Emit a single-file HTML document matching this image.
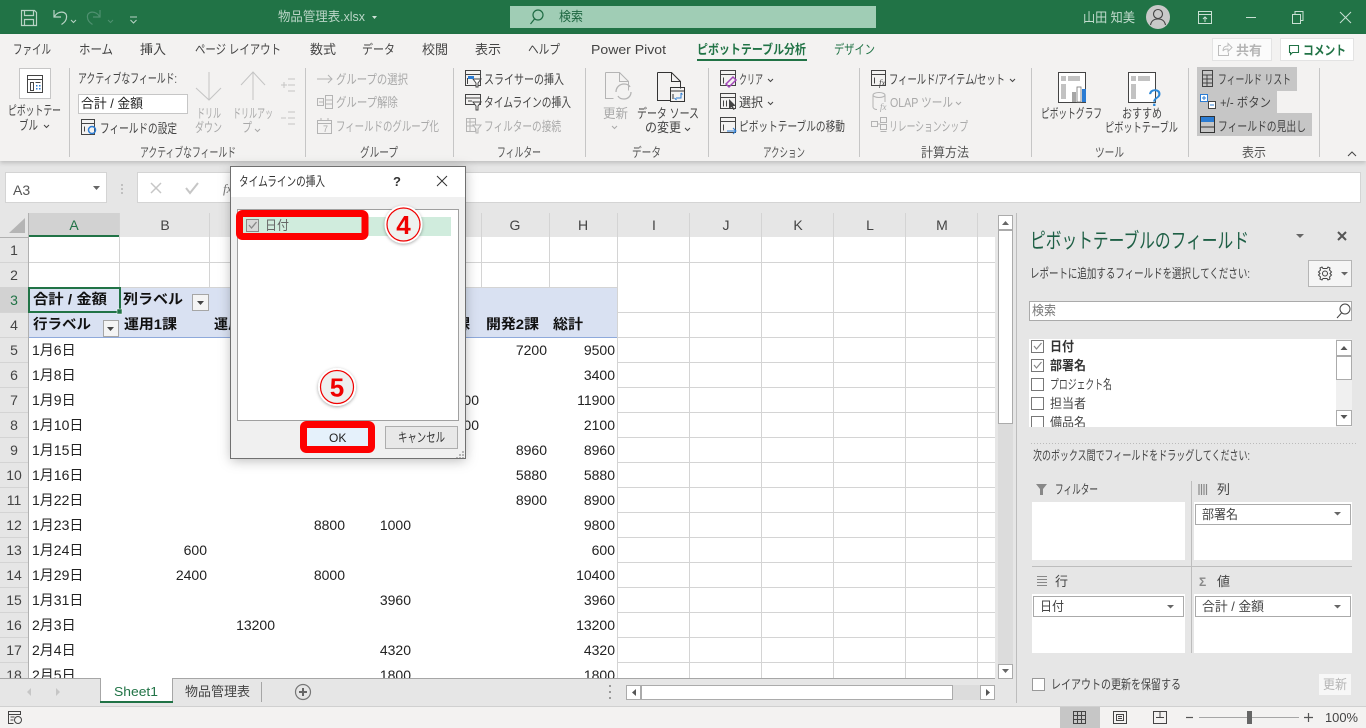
<!DOCTYPE html>
<html lang="ja"><head><meta charset="utf-8"><title>物品管理表.xlsx</title>
<style>
html,body{margin:0;padding:0;background:#e6e6e6;overflow:hidden}
svg{display:block;font-family:"Liberation Sans","Noto Sans CJK JP",sans-serif}
text{white-space:pre}
.r{font-size:13px;fill:#444}
.d{font-size:13px;fill:#a9a9a9}
.l{font-size:13px;fill:#555}
.t{font-size:13px;fill:#444}
.c{font-size:14px;fill:#222}
.n{font-size:14px;fill:#222;text-anchor:end}
.b{font-size:14px;fill:#111;font-weight:700}
.h{font-size:14px;fill:#444;text-anchor:middle}
.p{font-size:13px;fill:#444}
.i{fill:none;stroke:#444;stroke-width:1}
.g{fill:none;stroke:#b0b0b0;stroke-width:1}
.gl{stroke:#d4d4d4;stroke-width:1}
.sep{stroke:#c6c6c6;stroke-width:1}
</style></head><body>
<svg xmlns="http://www.w3.org/2000/svg" width="1366" height="728" viewBox="0 0 1366 728">
<defs>
<filter id="sh" x="-20%" y="-20%" width="140%" height="140%"><feDropShadow dx="0" dy="2" stdDeviation="6" flood-color="#000" flood-opacity=".28"/></filter>
<filter id="rs" x="-5%" y="-50%" width="110%" height="200%"><feDropShadow dx="0" dy="2" stdDeviation="2" flood-color="#000" flood-opacity=".18"/></filter>
<filter id="cs" x="-30%" y="-30%" width="160%" height="160%"><feDropShadow dx="0" dy="1" stdDeviation="1.5" flood-color="#000" flood-opacity=".35"/></filter>
</defs>

<!-- background -->
<rect width="1366" height="728" fill="#e6e6e6"/>

<!-- title bar -->
<rect width="1366" height="34" fill="#217346"/>
<g fill="none" stroke="#b9d3c5" stroke-width="1.2">
<path d="M21.5 10.5h13l2 2v13h-15z"/><path d="M24.5 10.5v5h9v-5M24.5 25.5v-6h9v6"/>
<path d="M54 10v7h7M54.5 16.5c3-6 13-6 12 1 0 3-2 5-5 7"/>
</g>
<g fill="none" stroke="#4f9070" stroke-width="1.2"><path d="M100 10v7h-7M99.500 16.500c-3-6-13-6-12 1 0 3 2 5 5 7"/></g>
<path d="M71 20l2.500 2.500L76 20" fill="none" stroke="#b9d3c5"/>
<path d="M108 20l2.500 2.500L113 20" fill="none" stroke="#4f9070"/>
<path d="M130 17h7M130.500 20l3 3 3-3" fill="none" stroke="#b9d3c5"/>
<text x="278" y="21" font-size="13" fill="#bcd6c8" textLength="87" lengthAdjust="spacingAndGlyphs">物品管理表.xlsx</text>
<path d="M372 16h5l-2.500 3z" fill="#cfe3d8"/>
<rect x="510" y="6" width="366" height="22" fill="#a0cdb5"/>
<circle cx="538" cy="15" r="5" fill="none" stroke="#1e6b43" stroke-width="1.2"/><path d="M534.500 19l-4 5" stroke="#1e6b43" stroke-width="1.2"/>
<text x="559" y="21" font-size="13" fill="#1d6640" textLength="24" lengthAdjust="spacingAndGlyphs">検索</text>
<text x="1083" y="22" font-size="13" fill="#c4dccf" textLength="52" lengthAdjust="spacingAndGlyphs">山田 知美</text>
<circle cx="1158" cy="17" r="12" fill="#c9c9c9"/>
<circle cx="1158" cy="14" r="4.500" fill="none" stroke="#444" stroke-width="1.100"/><path d="M1150.500 25c1-5 4-6 7.500-6s6.500 1 7.500 6" fill="none" stroke="#444" stroke-width="1.100"/>
<g fill="none" stroke="#c9e0d3" stroke-width="1">
<path d="M1198.500 11.500h13v12h-13zM1198.500 14.500h13M1205 22v-5M1203 19l2-2 2 2"/>
<path d="M1246 17.500h10"/>
<path d="M1292.500 14.500h8v9h-8zM1295 14v-2.500h8v9h-2"/>
<path d="M1340 12l11 11M1351 12l-11 11"/>
</g>

<!-- ribbon -->
<rect x="0" y="34" width="1366" height="127" fill="#f3f2f1" filter="url(#rs)"/>
<g class="r">
<text class="t" x="13" y="54" textLength="38" lengthAdjust="spacingAndGlyphs">ファイル</text>
<text class="t" x="79" y="54" textLength="34" lengthAdjust="spacingAndGlyphs">ホーム</text>
<text class="t" x="140" y="54" textLength="26" lengthAdjust="spacingAndGlyphs">挿入</text>
<text class="t" x="195" y="54" textLength="86" lengthAdjust="spacingAndGlyphs">ページ レイアウト</text>
<text class="t" x="310" y="54" textLength="26" lengthAdjust="spacingAndGlyphs">数式</text>
<text class="t" x="362" y="54" textLength="33" lengthAdjust="spacingAndGlyphs">データ</text>
<text class="t" x="422" y="54" textLength="26" lengthAdjust="spacingAndGlyphs">校閲</text>
<text class="t" x="475" y="54" textLength="26" lengthAdjust="spacingAndGlyphs">表示</text>
<text class="t" x="528" y="54" textLength="32" lengthAdjust="spacingAndGlyphs">ヘルプ</text>
<text class="t" x="591" y="54" textLength="75" lengthAdjust="spacingAndGlyphs">Power Pivot</text>
</g>
<text x="697" y="54" font-size="13" font-weight="700" fill="#217346" textLength="109" lengthAdjust="spacingAndGlyphs">ピボットテーブル分析</text>
<rect x="697" y="59" width="110" height="2" fill="#217346"/>
<text x="834" y="54" font-size="13" fill="#217346" textLength="41" lengthAdjust="spacingAndGlyphs">デザイン</text>
<rect x="1212.500" y="38.500" width="59" height="22" fill="#fbfbfb" stroke="#e3e3e3"/>
<path d="M1221 45.500h-2.500v10h10v-3M1223 51c0-4 2-5 5-5v-2.500l4 4-4 4V49c-2 0-4 0-5 2z" fill="none" stroke="#bdbdbd"/>
<text x="1236" y="55" font-size="13" font-weight="700" fill="#b5b5b5" textLength="26" lengthAdjust="spacingAndGlyphs">共有</text>
<rect x="1280.500" y="38.500" width="73" height="22" fill="#fff" stroke="#e3e3e3"/>
<path d="M1289.500 45.500h9v7h-6l-2 2v-2h-1z" fill="none" stroke="#217346" stroke-width="1.100"/>
<text x="1303" y="55" font-size="13" font-weight="700" fill="#217346" textLength="43" lengthAdjust="spacingAndGlyphs">コメント</text>

<!-- ribbon separators -->
<g class="sep">
<path d="M69.500 68v89M305.500 68v89M453.500 68v89M585.500 68v89M708.500 68v89M859.500 68v89M1031.500 68v89M1188.500 68v89M1319.500 68v89"/>
</g>

<!-- pivot table group -->
<rect x="19.500" y="68.500" width="31" height="30" fill="#fff" stroke="#c6c6c6"/>
<g class="i"><path d="M27.500 75.500h15v17h-15zM27.500 79.500h15M30.500 82.500h3v8h-3zM35.500 82.500h5"/></g>
<path d="M36 85h1.500v1.500H36zM39 85h1.500v1.500H39zM36 88h1.500v1.500H36zM39 88h1.500v1.500H39z" fill="#2b7cd3"/>
<text class="r" x="8" y="115" textLength="53" lengthAdjust="spacingAndGlyphs">ピボットテー</text>
<text class="r" x="19" y="130" textLength="19" lengthAdjust="spacingAndGlyphs">ブル</text>
<path d="M44 125l2.500 2.500L49 125" fill="none" stroke="#444"/>

<!-- active field -->
<text class="r" x="78" y="83" textLength="99" lengthAdjust="spacingAndGlyphs">アクティブなフィールド:</text>
<rect x="78.500" y="94.500" width="109" height="19" fill="#fff" stroke="#c6c6c6"/>
<text x="81" y="108" font-size="13" fill="#222" textLength="62" lengthAdjust="spacingAndGlyphs">合計 / 金額</text>
<g class="i"><path d="M81.500 119.500h13v15h-13zM81.500 123.500h13M84.500 126.500v5"/></g>
<circle cx="92" cy="130" r="3.500" fill="none" stroke="#2b7cd3" stroke-width="1.500"/>
<text class="r" x="100" y="133" textLength="77" lengthAdjust="spacingAndGlyphs">フィールドの設定</text>
<g fill="none" stroke="#c4c4c4" stroke-width="1">
<path d="M209 72v28M196 88l13 12 12-12"/>
<path d="M253 72v28M241 85l12-13 12 13"/>
<path d="M281 85h6M284 82v6M288 79h7M288 85h7M288 91h7"/>
<path d="M281 118h5M288 112h7M288 118h7M288 124h7"/>
</g>
<text class="d" x="197" y="118" textLength="24" lengthAdjust="spacingAndGlyphs">ドリル</text>
<text class="d" x="195" y="132" textLength="27" lengthAdjust="spacingAndGlyphs">ダウン</text>
<text class="d" x="233" y="118" textLength="40" lengthAdjust="spacingAndGlyphs">ドリルアッ</text>
<text class="d" x="242" y="132" textLength="10" lengthAdjust="spacingAndGlyphs">プ</text>
<path d="M255 129l2.500 2.500L260 129" fill="none" stroke="#a9a9a9"/>
<text class="l" x="140" y="157" textLength="96" lengthAdjust="spacingAndGlyphs">アクティブなフィールド</text>

<!-- group -->
<g fill="none" stroke="#b4b4b4">
<path d="M317 79h15M328 75l4 4-4 4"/>
<path d="M317.500 98.500h6v7h-6zM325.500 95.500h7v13h-7zM325.500 100h7M325.500 104h7M319 102h4"/>
<path d="M317.500 120.500h14v13h-14zM317.500 123.500h14M321 118v3M328 118v3"/>
</g>
<text x="323" y="132" font-size="9" fill="#a9a9a9">7</text>
<text class="d" x="336" y="84" textLength="72" lengthAdjust="spacingAndGlyphs">グループの選択</text>
<text class="d" x="336" y="107" textLength="62" lengthAdjust="spacingAndGlyphs">グループ解除</text>
<text class="d" x="336" y="131" textLength="103" lengthAdjust="spacingAndGlyphs">フィールドのグループ化</text>
<text class="l" x="360" y="157" textLength="38" lengthAdjust="spacingAndGlyphs">グループ</text>

<!-- filter -->
<g class="i"><path d="M465.500 70.500h15v15h-15zM465.500 74.500h15M467.500 78v6"/><path d="M473 79h8l-3 4v4h-2v-4z" fill="#fff"/></g>
<rect x="468" y="76" width="6" height="3" fill="#2b7cd3"/>
<g class="i"><path d="M465.500 94.500h15v10h-15zM465.500 98h15M468 101h4"/><path d="M473 102h8l-3 4v4h-2v-4z" fill="#f3f2f1"/></g>
<g fill="none" stroke="#b4b4b4"><path d="M466.500 118.500h9v13h-9zM466.500 122h9M466.500 126h9M470 118v13"/><path d="M473 125h8l-3 4v4h-2v-4z" fill="#f3f2f1"/></g>
<text class="r" x="484" y="84" textLength="80" lengthAdjust="spacingAndGlyphs">スライサーの挿入</text>
<text class="r" x="484" y="107" textLength="87" lengthAdjust="spacingAndGlyphs">タイムラインの挿入</text>
<text class="d" x="484" y="131" textLength="77" lengthAdjust="spacingAndGlyphs">フィルターの接続</text>
<text class="l" x="497" y="157" textLength="44" lengthAdjust="spacingAndGlyphs">フィルター</text>

<!-- data -->
<g fill="none" stroke="#b4b4b4"><path d="M605.500 72.500h14l9 9v9M605.500 72.500v26h8M619.500 72.500v9h9"/><path d="M616 92c0-5 4-8 8-8 3 0 5 1 6 3M631 92c0 4-3 7-7 7-3 0-5-1-6-3" stroke-width="1.300"/></g>
<text class="d" x="603" y="118" textLength="25" lengthAdjust="spacingAndGlyphs">更新</text>
<path d="M612 126l2.500 2.500L617 126" fill="none" stroke="#a9a9a9"/>
<g fill="none" stroke="#333"><path d="M657.500 72.500h14l9 9v7M657.500 72.500v28h13M671.500 72.500v9h9"/><path d="M670.500 87.500h14v14h-14zM670.500 91h14M673 94v5"/></g>
<path d="M681 93v5h-5M674.500 98l2 2M681 93l1.500 1.500" fill="none" stroke="#2b7cd3"/>
<text class="r" x="637" y="118" textLength="62" lengthAdjust="spacingAndGlyphs">データ ソース</text>
<text class="r" x="645" y="132" textLength="36" lengthAdjust="spacingAndGlyphs">の変更</text>
<path d="M685 128l2.500 2.500L690 128" fill="none" stroke="#444"/>
<text class="l" x="632" y="157" textLength="29" lengthAdjust="spacingAndGlyphs">データ</text>

<!-- action -->
<g class="i"><path d="M720.500 70.500h15v15h-15zM720.500 74.500h15M723.500 77.500v6"/><path d="M726 84l7-7 3 3-7 7z" stroke="#a146b8" stroke-width="1.500"/></g>
<g class="i"><path d="M720.500 93.500h15v15h-15zM720.500 97.500h15M723.500 100.500v6M726.500 100.500v6"/></g>
<path d="M729 99v10l2.500-2 2 3 1.200-.8-2-3 3-.5z" fill="#444"/>
<g class="i"><path d="M720.500 117.500h15v15h-15zM720.500 121.500h15M723.500 124.500v6"/></g>
<path d="M727 131h9M733 128l3 3-3 3" fill="none" stroke="#2b7cd3"/>
<text class="r" x="739" y="84" textLength="24" lengthAdjust="spacingAndGlyphs">クリア</text>
<path d="M768 79l2.500 2.500L773 79" fill="none" stroke="#444"/>
<text class="r" x="739" y="107" textLength="24" lengthAdjust="spacingAndGlyphs">選択</text>
<path d="M768 102l2.500 2.500L773 102" fill="none" stroke="#444"/>
<text class="r" x="739" y="131" textLength="106" lengthAdjust="spacingAndGlyphs">ピボットテーブルの移動</text>
<text class="l" x="763" y="157" textLength="42" lengthAdjust="spacingAndGlyphs">アクション</text>

<!-- calc -->
<g class="i"><path d="M871.500 70.500h14v15h-14zM871.500 74.500h14M874.500 77.500v6"/></g>
<text x="879" y="86" font-size="9" font-style="italic" fill="#444" font-family="Liberation Serif">fx</text>
<text class="r" x="889" y="84" textLength="116" lengthAdjust="spacingAndGlyphs">フィールド/アイテム/セット</text>
<path d="M1010 79l2.500 2.500L1015 79" fill="none" stroke="#444"/>
<g fill="none" stroke="#b4b4b4"><ellipse cx="879" cy="95" rx="6" ry="2.500"/><path d="M873 95v12c0 1.500 2 2.500 4 2.500M885 95v7"/></g>
<text x="880" y="110" font-size="9" font-style="italic" fill="#a9a9a9" font-family="Liberation Serif">fx</text>
<text class="d" x="890" y="107" textLength="63" lengthAdjust="spacingAndGlyphs">OLAP ツール</text>
<path d="M956 102l2.500 2.500L961 102" fill="none" stroke="#a9a9a9"/>
<g fill="none" stroke="#b4b4b4"><path d="M871.500 121.500h6v5h-6zM880.500 117.500h6v5h-6zM880.500 124.500h6v5h-6zM877.500 124h3M880.500 131.500h6"/></g>
<text class="d" x="889" y="131" textLength="79" lengthAdjust="spacingAndGlyphs">リレーションシップ</text>
<text class="l" x="921" y="157" textLength="48" lengthAdjust="spacingAndGlyphs">計算方法</text>

<!-- tools -->
<rect x="1058.500" y="72.500" width="27" height="30" fill="#fff" stroke="#444"/>
<path d="M1061 76h5v5h-5zM1068 76h12v5h-12zM1061 84h5v15h-5z" fill="#c2c2c2"/>
<rect x="1072" y="92" width="4" height="10" fill="#a6a6a6"/><rect x="1077" y="87" width="4" height="15" fill="#fff" stroke="#777" stroke-width=".8"/><rect x="1082" y="89" width="4" height="13" fill="#2b7cd3"/>
<rect x="1128.500" y="72.500" width="27" height="30" fill="#fff" stroke="#444"/>
<path d="M1131 76h5v5h-5zM1138 76h12v5h-12zM1131 84h5v15h-5z" fill="#c2c2c2"/>
<text x="1148" y="106" font-size="24" fill="#2b88d8">?</text>
<text class="r" x="1041" y="118" textLength="61" lengthAdjust="spacingAndGlyphs">ピボットグラフ</text>
<text class="r" x="1122" y="118" textLength="40" lengthAdjust="spacingAndGlyphs">おすすめ</text>
<text class="r" x="1105" y="132" textLength="73" lengthAdjust="spacingAndGlyphs">ピボットテーブル</text>
<text class="l" x="1095" y="157" textLength="29" lengthAdjust="spacingAndGlyphs">ツール</text>

<!-- show -->
<path d="M1197 67h100v24h-20v22h35v23h-115z" fill="#c6c6c6"/>
<g class="i"><path d="M1202.500 70.500h10v16h-10zM1202.500 75h10M1202.500 79h10M1202.500 83h10M1207 75v11"/></g>
<path d="M1200.500 94.500h7v7h-7z" fill="#fff" stroke="#2b7cd3"/><path d="M1202 98h4M1204 96v4" stroke="#2b7cd3"/>
<path d="M1208.500 101.500h7v7h-7z" fill="#fff" stroke="#444"/><path d="M1210 105h4" stroke="#2b7cd3"/>
<rect x="1200.500" y="116.500" width="14" height="16" fill="none" stroke="#333"/><rect x="1201" y="117" width="13" height="5" fill="#2b7cd3"/><path d="M1200.500 127h14" stroke="#333"/>
<text class="r" x="1218" y="84" fill="#333" textLength="73" lengthAdjust="spacingAndGlyphs">フィールド リスト</text>
<text class="r" x="1220" y="107" textLength="51" lengthAdjust="spacingAndGlyphs">+/- ボタン</text>
<text class="r" x="1218" y="131" textLength="88" lengthAdjust="spacingAndGlyphs">フィールドの見出し</text>
<text class="l" x="1242" y="157" textLength="24" lengthAdjust="spacingAndGlyphs">表示</text>
<path d="M1348 156l4-4 4 4" fill="none" stroke="#444"/>

<!-- formula bar -->
<rect x="5.500" y="172.500" width="101" height="30" fill="#fff" stroke="#d4d4d4"/>
<text x="13" y="195" font-size="14" fill="#555">A3</text>
<path d="M93 186h7l-3.500 4z" fill="#666"/>
<path d="M122 184.500v1M122 188.500v1M122 192.500v1" stroke="#999" stroke-width="2"/>
<rect x="137.500" y="172.500" width="1223" height="30" fill="#fff" stroke="#d4d4d4"/>
<path d="M151 183l10 10M161 183l-10 10" stroke="#c6c6c6" stroke-width="1.500"/>
<path d="M186 188l4 5 8-10" fill="none" stroke="#c6c6c6" stroke-width="2"/>
<text x="223" y="193" font-size="13" font-style="italic" fill="#777" font-family="Liberation Serif">fx</text>

<!-- sheet -->
<rect x="29" y="237" width="966" height="442" fill="#fff"/>
<rect x="29" y="287" width="589" height="50" fill="#d9e1f2"/>
<path d="M29 337.500h589" stroke="#8ea9db"/>
<rect x="0" y="213" width="995" height="24" fill="#e6e6e6"/>
<rect x="0" y="237" width="28" height="442" fill="#e6e6e6"/>
<path d="M25 218v15H9z" fill="#b5b5b5"/>
<rect x="29" y="213" width="91" height="24" fill="#d2d2d2"/>
<rect x="29" y="235" width="91" height="2" fill="#217346"/>
<rect x="0" y="287" width="28" height="25" fill="#d2d2d2"/>
<path d="M0 237.500h29M28.500 213v466" stroke="#b0b0b0"/>
<g class="gl">
<path d="M119.500 213v24M209.500 213v24M481.500 213v24M549.500 213v24M617.500 213v24M689.500 213v24M761.500 213v24M833.500 213v24M905.500 213v24M977.500 213v24"/>
<path d="M0 262.500h28M0 312.500h28M0 337.500h28M0 362.500h28M0 387.500h28M0 412.500h28M0 437.500h28M0 462.500h28M0 487.500h28M0 512.500h28M0 537.500h28M0 562.500h28M0 587.500h28M0 612.500h28M0 637.500h28M0 662.500h28"/>
<path d="M29 262.500h966M29 287.500h589M618 312.500h377M618 337.500h377M618 362.500h377M618 387.500h377M618 412.500h377M618 437.500h377M618 462.500h377M618 487.500h377M618 512.500h377M618 537.500h377M618 562.500h377M618 587.500h377M618 612.500h377M618 637.500h377M618 662.500h377"/>
<path d="M119.500 237v50M209.500 237v50M481.500 237v50M549.500 237v50M617.500 237v442M689.500 237v442M761.500 237v442M833.500 237v442M905.500 237v442M977.500 237v442"/>
</g>
<g>
<text class="h" x="74" y="230" fill="#217346" style="fill:#217346">A</text>
<text class="h" x="165" y="230">B</text>
<text class="h" x="515" y="230">G</text><text class="h" x="583" y="230">H</text>
<text class="h" x="654" y="230">I</text><text class="h" x="726" y="230">J</text>
<text class="h" x="798" y="230">K</text><text class="h" x="870" y="230">L</text><text class="h" x="942" y="230">M</text>
<text class="h" x="14" y="255">1</text><text class="h" x="14" y="280">2</text>
<text class="h" x="14" y="305" style="fill:#217346">3</text><text class="h" x="14" y="330">4</text>
<text class="h" x="14" y="355">5</text><text class="h" x="14" y="380">6</text>
<text class="h" x="14" y="405">7</text><text class="h" x="14" y="430">8</text>
<text class="h" x="14" y="455">9</text><text class="h" x="14" y="480">10</text>
<text class="h" x="14" y="505">11</text><text class="h" x="14" y="530">12</text>
<text class="h" x="14" y="555">13</text><text class="h" x="14" y="580">14</text>
<text class="h" x="14" y="605">15</text><text class="h" x="14" y="630">16</text>
<text class="h" x="14" y="655">17</text><text class="h" x="14" y="680">18</text>
</g>
<text class="b" x="33" y="304" textLength="74" lengthAdjust="spacingAndGlyphs">合計 / 金額</text>
<text class="b" x="123" y="304" textLength="60" lengthAdjust="spacingAndGlyphs">列ラベル</text>
<rect x="192.500" y="294.500" width="16" height="16" fill="#f4f4f4" stroke="#a6a6a6"/><path d="M197 301h7l-3.500 4z" fill="#444"/>
<text class="b" x="33" y="329" textLength="58" lengthAdjust="spacingAndGlyphs">行ラベル</text>
<rect x="103.500" y="320.500" width="15" height="16" fill="#f4f4f4" stroke="#a6a6a6"/><path d="M107 327h7l-3.500 4z" fill="#444"/>
<text class="b" x="124" y="329" textLength="53" lengthAdjust="spacingAndGlyphs">運用1課</text>
<text class="b" x="214" y="329">運用</text>
<text class="b" x="456" y="329">課</text>
<text class="b" x="486" y="329" textLength="53" lengthAdjust="spacingAndGlyphs">開発2課</text>
<text class="b" x="553" y="329" textLength="30" lengthAdjust="spacingAndGlyphs">総計</text>
<g>
<text class="c" x="32" y="355">1月6日</text><text class="n" x="547" y="355">7200</text><text class="n" x="615" y="355">9500</text>
<text class="c" x="32" y="380">1月8日</text><text class="n" x="615" y="380">3400</text>
<text class="c" x="32" y="405">1月9日</text><text class="n" x="479" y="405">8700</text><text class="n" x="615" y="405">11900</text>
<text class="c" x="32" y="430">1月10日</text><text class="n" x="479" y="430">2100</text><text class="n" x="615" y="430">2100</text>
<text class="c" x="32" y="455">1月15日</text><text class="n" x="547" y="455">8960</text><text class="n" x="615" y="455">8960</text>
<text class="c" x="32" y="480">1月16日</text><text class="n" x="547" y="480">5880</text><text class="n" x="615" y="480">5880</text>
<text class="c" x="32" y="505">1月22日</text><text class="n" x="547" y="505">8900</text><text class="n" x="615" y="505">8900</text>
<text class="c" x="32" y="530">1月23日</text><text class="n" x="345" y="530">8800</text><text class="n" x="411" y="530">1000</text><text class="n" x="615" y="530">9800</text>
<text class="c" x="32" y="555">1月24日</text><text class="n" x="207" y="555">600</text><text class="n" x="615" y="555">600</text>
<text class="c" x="32" y="580">1月29日</text><text class="n" x="207" y="580">2400</text><text class="n" x="345" y="580">8000</text><text class="n" x="615" y="580">10400</text>
<text class="c" x="32" y="605">1月31日</text><text class="n" x="411" y="605">3960</text><text class="n" x="615" y="605">3960</text>
<text class="c" x="32" y="630">2月3日</text><text class="n" x="275" y="630">13200</text><text class="n" x="615" y="630">13200</text>
<text class="c" x="32" y="655">2月4日</text><text class="n" x="411" y="655">4320</text><text class="n" x="615" y="655">4320</text>
<text class="c" x="32" y="680">2月5日</text><text class="n" x="411" y="680">1800</text><text class="n" x="615" y="680">1800</text>
</g>
<rect x="29" y="288" width="91" height="24" fill="none" stroke="#217346" stroke-width="2"/>
<rect x="117" y="309" width="5" height="5" fill="#217346" stroke="#fff" stroke-width=".5"/>

<!-- v scrollbar -->
<rect x="995" y="213" width="22" height="466" fill="#e6e6e6"/>
<rect x="998" y="215" width="15" height="463" fill="#dcdcdc"/>
<rect x="998.500" y="215.500" width="14" height="14" fill="#fff" stroke="#ababab"/><path d="M1002 225h7l-3.500-4z" fill="#666"/>
<rect x="998.500" y="230.500" width="14" height="193" fill="#fff" stroke="#ababab"/>
<rect x="998.500" y="664.500" width="14" height="14" fill="#fff" stroke="#ababab"/><path d="M1002 669h7l-3.500 4z" fill="#666"/>

<!-- bottom tab bar -->
<rect x="0" y="679" width="1016" height="27" fill="#e6e6e6"/>
<path d="M0 678.500h995" stroke="#a6a6a6"/>
<path d="M31 688v8l-4-4zM56 688v8l4-4z" fill="#c6c6c6"/>
<rect x="100" y="678" width="73" height="25" fill="#fff"/>
<path d="M100.500 678v25M172.500 678v25" stroke="#a6a6a6"/>
<rect x="100" y="701" width="73" height="2" fill="#217346"/>
<text x="114" y="696" font-size="13" fill="#217346" textLength="44" lengthAdjust="spacingAndGlyphs">Sheet1</text>
<text x="185" y="696" font-size="13" fill="#444" textLength="65" lengthAdjust="spacingAndGlyphs">物品管理表</text>
<path d="M261.500 682v20" stroke="#a6a6a6"/>
<circle cx="303" cy="692" r="7.500" fill="none" stroke="#777" stroke-width="1.200"/><path d="M303 688v8M299 692h8" stroke="#666" stroke-width="2"/>
<path d="M610 685v2M610 691v2M610 697v2" stroke="#999" stroke-width="2"/>
<rect x="626" y="685" width="369" height="15" fill="#dcdcdc"/>
<rect x="626.500" y="685.500" width="14" height="14" fill="#fff" stroke="#ababab"/><path d="M636 689v7l-4-3.500z" fill="#555"/>
<rect x="641.500" y="685.500" width="311" height="14" fill="#fff" stroke="#ababab"/>
<rect x="980.500" y="685.500" width="14" height="14" fill="#fff" stroke="#ababab"/><path d="M986 689v7l4-3.500z" fill="#555"/>

<!-- status bar -->
<rect x="0" y="706" width="1366" height="22" fill="#f3f2f1"/>
<path d="M0 706.500h1366" stroke="#d0d0d0"/>
<g class="i" stroke="#555"><path d="M8.500 711.500h12v3h-12zM8.500 714.500v9h5M10.500 717h4M10.500 720h3"/><circle cx="18" cy="720" r="3.500"/></g>
<rect x="1060" y="707" width="40" height="21" fill="#c6c6c6"/>
<g class="i" stroke="#333"><path d="M1073.500 711.500h12v12h-12zM1073.500 715.500h12M1073.500 719.500h12M1077.500 711.500v12M1081.500 711.500v12"/>
<path d="M1113.500 711.500h13v12h-13zM1116.500 714.500h7v6h-7zM1118 716.500h4M1118 718.500h4"/>
<path d="M1153.500 711.500h13v12h-13zM1160 711.500v6M1156 717.500h8"/></g>
<path d="M1186 717.500h7" stroke="#555" stroke-width="1.200"/>
<path d="M1199 717.500h100" stroke="#a6a6a6"/>
<rect x="1247" y="711" width="5" height="13" fill="#666"/>
<path d="M1304 717.500h9M1308.500 713v9" stroke="#555" stroke-width="1.200"/>
<text x="1325" y="722" font-size="13" fill="#444" textLength="33" lengthAdjust="spacingAndGlyphs">100%</text>

<!-- field panel -->
<path d="M1016.500 213v490" stroke="#bdbdbd"/>
<text x="1030" y="248" font-size="21" fill="#1e5f45" textLength="219" lengthAdjust="spacingAndGlyphs">ピボットテーブルのフィールド</text>
<path d="M1296 234h8l-4 4z" fill="#666"/>
<path d="M1338 232l8 8M1346 232l-8 8" stroke="#555" stroke-width="2"/>
<text class="p" x="1030" y="278" textLength="220" lengthAdjust="spacingAndGlyphs">レポートに追加するフィールドを選択してください:</text>
<rect x="1308.500" y="260.500" width="43" height="26" fill="#f5f5f5" stroke="#b5b5b5"/>
<g fill="none" stroke="#444"><circle cx="1325" cy="273.500" r="2.500"/><path d="M1322 267l1 1.500h4l1-1.500 2 1-.5 2 2 2-1.500 1.500 1.500 1.500-2 2 .5 2-2 1-1-1.500h-4l-1 1.500-2-1 .5-2-2-2 1.500-1.500-1.500-1.500 2-2-.5-2z"/></g>
<path d="M1341 272h7l-3.500 3.500z" fill="#666"/>
<rect x="1029.500" y="301.500" width="322" height="19" fill="#fff" stroke="#aaa"/>
<text x="1032" y="315" font-size="13" fill="#777" textLength="24" lengthAdjust="spacingAndGlyphs">検索</text>
<circle cx="1345" cy="309" r="5" fill="none" stroke="#444"/><path d="M1341.500 313l-4.500 5" stroke="#444"/>
<rect x="1029" y="339" width="323" height="88" fill="#fff"/>
<rect x="1336" y="339" width="16" height="88" fill="#f0f0f0"/>
<rect x="1336.500" y="340.500" width="15" height="15" fill="#fff" stroke="#ababab"/><path d="M1340.500 350h7l-3.500-4z" fill="#555"/>
<rect x="1336.500" y="356.500" width="15" height="23" fill="#fff" stroke="#ababab"/>
<rect x="1336.500" y="410.500" width="15" height="15" fill="#fff" stroke="#ababab"/><path d="M1340.500 415h7l-3.500 4z" fill="#555"/>
<g fill="#fff" stroke="#777"><rect x="1031.500" y="340.500" width="12" height="12"/><rect x="1031.500" y="359.500" width="12" height="12"/><rect x="1031.500" y="378.500" width="12" height="12"/><rect x="1031.500" y="397.500" width="12" height="12"/></g>
<path d="M1034 346l2.500 3 5-6M1034 365l2.500 3 5-6" fill="none" stroke="#888" stroke-width="1.200"/>
<text x="1050" y="351" font-size="13" font-weight="700" fill="#333" textLength="24" lengthAdjust="spacingAndGlyphs">日付</text>
<text x="1050" y="370" font-size="13" font-weight="700" fill="#333" textLength="36" lengthAdjust="spacingAndGlyphs">部署名</text>
<text class="p" x="1050" y="389" textLength="62" lengthAdjust="spacingAndGlyphs">プロジェクト名</text>
<text class="p" x="1050" y="408" textLength="36" lengthAdjust="spacingAndGlyphs">担当者</text>
<svg x="1029" y="339" width="307" height="88"><rect x="2.500" y="77.500" width="12" height="12" fill="#fff" stroke="#777"/><text class="p" x="21" y="88" textLength="36" lengthAdjust="spacingAndGlyphs">備品名</text></svg>
<path d="M1031 443.500h325" stroke="#bbb" stroke-dasharray="1 2"/>
<text class="p" x="1033" y="460" textLength="217" lengthAdjust="spacingAndGlyphs">次のボックス間でフィールドをドラッグしてください:</text>

<path d="M1036 484h11l-4 5v6h-3v-6z" fill="#888"/>
<text class="p" x="1055" y="494" textLength="43" lengthAdjust="spacingAndGlyphs">フィルター</text>
<path d="M1199 484v11M1201.500 484v11M1204 484v11M1206.500 484v11" stroke="#888" stroke-width="1.200"/>
<text class="p" x="1217" y="494">列</text>
<rect x="1032" y="502" width="153" height="58" fill="#fff"/>
<rect x="1194" y="502" width="158" height="58" fill="#fff"/>
<rect x="1032" y="594" width="153" height="59" fill="#fff"/>
<rect x="1194" y="594" width="158" height="59" fill="#fff"/>
<path d="M1191.500 481v172M1032 566.500h320" stroke="#bdbdbd"/>
<path d="M1037 576.500h10M1037 579.500h10M1037 582.500h10M1037 585.500h10" stroke="#888"/>
<text class="p" x="1055" y="586">行</text>
<text x="1199" y="586" font-size="12" font-weight="700" fill="#888">Σ</text>
<text class="p" x="1217" y="586">値</text>
<rect x="1195.500" y="504.500" width="155" height="20" fill="#fff" stroke="#aaa"/>
<text class="p" x="1202" y="519" textLength="36" lengthAdjust="spacingAndGlyphs">部署名</text>
<path d="M1334 512h7l-3.500 3.500z" fill="#666"/>
<rect x="1033.500" y="596.500" width="150" height="20" fill="#fff" stroke="#aaa"/>
<text class="p" x="1040" y="611" textLength="24" lengthAdjust="spacingAndGlyphs">日付</text>
<path d="M1167 605h7l-3.500 3.500z" fill="#666"/>
<rect x="1195.500" y="596.500" width="155" height="20" fill="#fff" stroke="#aaa"/>
<text class="p" x="1202" y="611" textLength="62" lengthAdjust="spacingAndGlyphs">合計 / 金額</text>
<path d="M1334 605h7l-3.500 3.500z" fill="#666"/>
<rect x="1032.500" y="678.500" width="12" height="12" fill="#fff" stroke="#999"/>
<text class="p" x="1051" y="689" textLength="130" lengthAdjust="spacingAndGlyphs">レイアウトの更新を保留する</text>
<rect x="1319" y="674" width="32" height="21" fill="#f7f7f7"/>
<text x="1323" y="689" font-size="13" fill="#b5b5b5" textLength="24" lengthAdjust="spacingAndGlyphs">更新</text>

<!-- dialog -->
<rect x="231" y="166.500" width="234.500" height="292" fill="#f0f0f0" filter="url(#sh)"/>
<rect x="231" y="167" width="234" height="30" fill="#fff"/>
<rect x="230.500" y="166.500" width="235" height="292" fill="none" stroke="#707070"/>
<text x="239" y="186" font-size="13" fill="#333" textLength="86" lengthAdjust="spacingAndGlyphs">タイムラインの挿入</text>
<text x="393" y="186" font-size="13" font-weight="700" fill="#333">?</text>
<path d="M437 176l10 10M447 176l-10 10" stroke="#333"/>
<rect x="237.500" y="209.500" width="221" height="211" fill="#fff" stroke="#a0a0a0"/>
<rect x="243" y="217" width="208" height="19" fill="#d0ecdd"/>
<rect x="246.500" y="219.500" width="12" height="12" fill="#d8d8d8" stroke="#8a8a8a"/>
<path d="M249 225l2.500 3 5-6" fill="none" stroke="#888" stroke-width="1.300"/>
<text x="265" y="230" font-size="13" fill="#666" textLength="24" lengthAdjust="spacingAndGlyphs">日付</text>
<rect x="307" y="428" width="61" height="18" fill="#e5f1fb"/>
<text x="329" y="442" font-size="12" fill="#222">OK</text>
<rect x="385.500" y="426.500" width="72" height="22" fill="#e8e8e8" stroke="#adadad"/>
<text x="398" y="442" font-size="13" fill="#333" textLength="47" lengthAdjust="spacingAndGlyphs">キャンセル</text>
<path d="M462 451h2v2h-2zM459 454h2v2h-2zM462 454h2v2h-2zM456 457h2v1h-2zM459 457h2v1h-2zM462 457h2v1h-2z" fill="#b5b5b5"/>

<!-- annotations -->
<rect x="239.500" y="213.500" width="125.500" height="23" rx="3" fill="none" stroke="#fe0000" stroke-width="7"/>
<rect x="303.500" y="424.500" width="68" height="25" rx="3" fill="none" stroke="#fe0000" stroke-width="7"/>
<circle cx="403.500" cy="224.500" r="19" fill="#fff" filter="url(#cs)"/>
<circle cx="403.500" cy="224.500" r="16.500" fill="#eef2ef" stroke="#f00000" stroke-width="1.200"/>
<text x="403.500" y="234" font-size="26" font-weight="700" fill="#f00000" text-anchor="middle" font-family="Liberation Sans">4</text>
<circle cx="337" cy="387" r="19" fill="#fff" filter="url(#cs)"/>
<circle cx="337" cy="387" r="16.500" fill="#eef0ef" stroke="#f00000" stroke-width="1.200"/>
<text x="337" y="396.500" font-size="26" font-weight="700" fill="#f00000" text-anchor="middle" font-family="Liberation Sans">5</text>
</svg>
</body></html>
